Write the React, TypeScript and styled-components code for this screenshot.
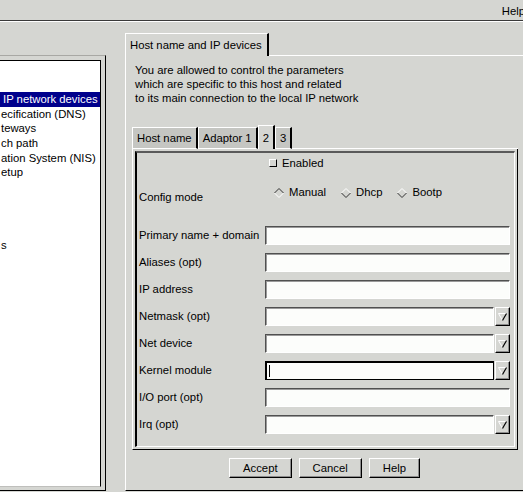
import React from "react";
import styled, { createGlobalStyle } from "styled-components";

const GlobalStyle = createGlobalStyle`
  html, body {
    margin: 0;
    padding: 0;
  }
  body {
    background: #d5d6d2;
    font-family: "Liberation Sans", Arial, sans-serif;
    font-size: 11.3px;
    color: #000;
    overflow: hidden;
  }
`;

const Window = styled.div`
  width: 523px;
  height: 492px;
  overflow: hidden;
  display: flex;
  flex-direction: column;
`;

const MenuBar = styled.div`
  flex: none;
  height: 20px;
  display: flex;
  justify-content: flex-end;
  align-items: center;
  border-bottom: 1px solid #3a3a3a;
  box-shadow: 0 1px 0 #ffffff;
  overflow: hidden;
`;

const MenuItem = styled.span`
  margin-right: -2px;
  padding-top: 2px;
`;

const Main = styled.div`
  flex: 1;
  display: flex;
  min-height: 0;
`;

/* left tree, scrolled sideways */
const LeftPane = styled.div`
  flex: none;
  box-sizing: border-box;
  width: 106px;
  margin-top: 34px;
  margin-bottom: 1px;
  padding: 4px 4px 3px 0;
  border-top: 1px solid #a8a8a4;
  border-right: 1px solid #000;
  border-bottom: 1px solid #000;
  display: flex;
`;

const List = styled.div`
  flex: 1;
  background: #fff;
  border-top: 1px solid #000;
  border-right: 1px solid #000;
  border-bottom: 1px solid #bfbfbc;
  padding-top: 2px;
  overflow: hidden;
`;

const ListRow = styled.div<{ $selected?: boolean; $indent?: number }>`
  height: 14.6px;
  line-height: 14px;
  padding-left: ${(p) => p.$indent ?? 1}px;
  white-space: nowrap;
  overflow: hidden;
  background: ${(p) => (p.$selected ? "#00008c" : "transparent")};
  color: ${(p) => (p.$selected ? "#fff" : "#000")};
`;

const Notebook = styled.div`
  flex: none;
  width: 399px;
  margin-left: 19px;
  margin-top: 11px;
  margin-bottom: 1px;
  display: flex;
  flex-direction: column;
`;

const TabStrip = styled.div`
  flex: none;
  display: flex;
  align-items: flex-end;
  height: 24px;
`;

const TopTab = styled.div`
  height: 23px;
  padding: 0 5px 0 4px;
  display: flex;
  align-items: center;
  border-top: 1px solid #fff;
  border-left: 1px solid #fff;
  border-right: 2px solid #000;
  box-sizing: border-box;
  white-space: nowrap;
`;

const TabFiller = styled.div`
  flex: 1;
  border-bottom: 1px solid #fff;
`;

const Page = styled.div`
  flex: 1;
  display: flex;
  flex-direction: column;
  border-left: 1px solid #fff;
  border-bottom: 1px solid #000;
  border-right: 1px solid #000;
`;

const Intro = styled.p`
  margin: 7px 0 0 9px;
  line-height: 14px;
`;

const InnerNotebook = styled.div`
  margin: 20px 5px 0 6px;
  display: flex;
  flex-direction: column;
`;

const InnerTabStrip = styled.div`
  display: flex;
  align-items: flex-end;
  height: 24px;
`;

const InnerTab = styled.div<{ $active?: boolean }>`
  height: ${(p) => (p.$active ? 24 : 22)}px;
  box-sizing: border-box;
  padding: 0 4px;
  display: flex;
  align-items: center;
  background: ${(p) => (p.$active ? "#d5d6d2" : "#c5c6c2")};
  border-top: 1px solid #fff;
  border-left: 1px solid #fff;
  border-right: 2px solid #000;
  border-bottom: ${(p) => (p.$active ? "none" : "1px solid #fff")};
  white-space: nowrap;
`;

const InnerPage = styled.div`
  border-left: 1px solid #fff;
  border-right: 1px solid #000;
  border-bottom: 1px solid #000;
  padding: 2px;
`;

const Frame = styled.div`
  border-style: solid;
  border-width: 2px 1px 1px 2px;
  border-color: #5a5a5a #fff #fff #000;
  padding: 0 4px 8px 2px;
`;

const FormGrid = styled.div`
  display: grid;
  grid-template-columns: 126px 1fr;
  grid-template-rows: 20px 49px repeat(8, 27px);
  align-items: center;
`;

const Label = styled.span<{ $top?: number }>`
  white-space: nowrap;
  align-self: ${(p) => (p.$top != null ? "start" : "center")};
  margin-top: ${(p) => p.$top ?? 0}px;
  line-height: 13px;
`;

const CheckRow = styled.div`
  display: flex;
  align-items: center;
  gap: 5px;
  padding-left: 4px;
`;

const CheckBox = styled.span`
  width: 8px;
  height: 8px;
  box-sizing: border-box;
  border: 1px solid;
  border-color: #fff #000 #000 #fff;
  background: #d5d6d2;
`;

const RadioRow = styled.div`
  align-self: start;
  margin-top: 13px;
  display: flex;
  align-items: center;
  padding-left: 9px;
  gap: 15px;
  line-height: 13px;
`;

const Radio = styled.span`
  display: flex;
  align-items: center;
  gap: 5px;
`;

const Entry = styled.div<{ $focused?: boolean }>`
  flex: 1;
  height: 19px;
  box-sizing: border-box;
  background: #fcfdfb;
  border: 1px solid;
  border-color: ${(p) => (p.$focused ? "#000" : "#505050 #fff #fff #505050")};
  box-shadow: ${(p) =>
    p.$focused ? "inset 1px 1px 0 #000" : "inset 1px 1px 0 #9a9a9a"};
  display: flex;
  align-items: center;
  padding-left: 3px;
`;

const Caret = styled.span`
  width: 1px;
  height: 12px;
  background: #000;
`;

const Combo = styled.div`
  display: flex;
  align-items: stretch;
  height: 19px;
`;

const ComboButton = styled.span`
  flex: none;
  width: 15px;
  box-sizing: border-box;
  border: 1px solid;
  border-color: #fff #000 #000 #fff;
  box-shadow: inset -1px -1px 0 #8c8c8c;
  display: flex;
  align-items: center;
  justify-content: center;
  margin-left: 1px;
`;

const ButtonRow = styled.div`
  display: flex;
  justify-content: center;
  gap: 7px;
  margin-top: 8px;
`;

const Button = styled.div`
  height: 20px;
  box-sizing: border-box;
  padding: 0 13px;
  display: flex;
  align-items: center;
  border: 1px solid;
  border-color: #fff #000 #000 #fff;
  box-shadow: inset -1px -1px 0 #8c8c8c;
`;

const Diamond = ({ on }: { on?: boolean }) => (
  <svg width="10" height="10" viewBox="0 0 10 10">
    <path d="M0.5 5 L5 0.5 L9.5 5" fill="none" stroke={on ? "#303030" : "#fff"} />
    <path d="M0.5 5 L5 9.5 L9.5 5" fill="none" stroke={on ? "#fff" : "#303030"} />
  </svg>
);

const Arrow = () => (
  <svg width="9" height="9" viewBox="0 0 9 9">
    <path d="M0.5 1.5 H8.5" stroke="#fff" />
    <path d="M0.5 1.5 L4.5 8.5" stroke="#fff" />
    <path d="M8.5 1.5 L4.5 8.5" stroke="#000" strokeWidth="1.2" />
  </svg>
);

const treeRows = [
  "",
  "",
  "IP network devices",
  "ecification (DNS)",
  "teways",
  "ch path",
  "ation System (NIS)",
  "etup",
  "",
  "",
  "",
  "",
  "s",
];

const fields: { label: string; combo?: boolean; focused?: boolean }[] = [
  { label: "Primary name + domain" },
  { label: "Aliases (opt)" },
  { label: "IP address" },
  { label: "Netmask (opt)", combo: true },
  { label: "Net device", combo: true },
  { label: "Kernel module", combo: true, focused: true },
  { label: "I/O port (opt)" },
  { label: "Irq (opt)", combo: true },
];

export default function App() {
  return (
    <Window>
      <GlobalStyle />
      <MenuBar>
        <MenuItem>Help</MenuItem>
      </MenuBar>
      <Main>
        <LeftPane>
          <List>
            {treeRows.map((r, i) => (
              <ListRow key={i} $selected={i === 2} $indent={i === 2 ? 3 : 1}>
                {r}
              </ListRow>
            ))}
          </List>
        </LeftPane>
        <Notebook>
          <TabStrip>
            <TopTab>Host name and IP devices</TopTab>
            <TabFiller />
          </TabStrip>
          <Page>
            <Intro>
              You are allowed to control the parameters
              <br />
              which are specific to this host and related
              <br />
              to its main connection to the local IP network
            </Intro>
            <InnerNotebook>
              <InnerTabStrip>
                <InnerTab>Host name</InnerTab>
                <InnerTab>Adaptor 1</InnerTab>
                <InnerTab $active>2</InnerTab>
                <InnerTab>3</InnerTab>
                <TabFiller />
              </InnerTabStrip>
              <InnerPage>
                <Frame>
                  <FormGrid>
                    <span />
                    <CheckRow>
                      <CheckBox />
                      Enabled
                    </CheckRow>
                    <Label $top={18}>Config mode</Label>
                    <RadioRow>
                      <Radio>
                        <Diamond on />
                        Manual
                      </Radio>
                      <Radio>
                        <Diamond />
                        Dhcp
                      </Radio>
                      <Radio>
                        <Diamond />
                        Bootp
                      </Radio>
                    </RadioRow>
                    {fields.map((f) => (
                      <React.Fragment key={f.label}>
                        <Label>{f.label}</Label>
                        {f.combo ? (
                          <Combo>
                            <Entry $focused={f.focused}>{f.focused && <Caret />}</Entry>
                            <ComboButton>
                              <Arrow />
                            </ComboButton>
                          </Combo>
                        ) : (
                          <Combo>
                            <Entry />
                          </Combo>
                        )}
                      </React.Fragment>
                    ))}
                  </FormGrid>
                </Frame>
              </InnerPage>
            </InnerNotebook>
            <ButtonRow>
              <Button>Accept</Button>
              <Button>Cancel</Button>
              <Button>Help</Button>
            </ButtonRow>
          </Page>
        </Notebook>
      </Main>
    </Window>
  );
}
